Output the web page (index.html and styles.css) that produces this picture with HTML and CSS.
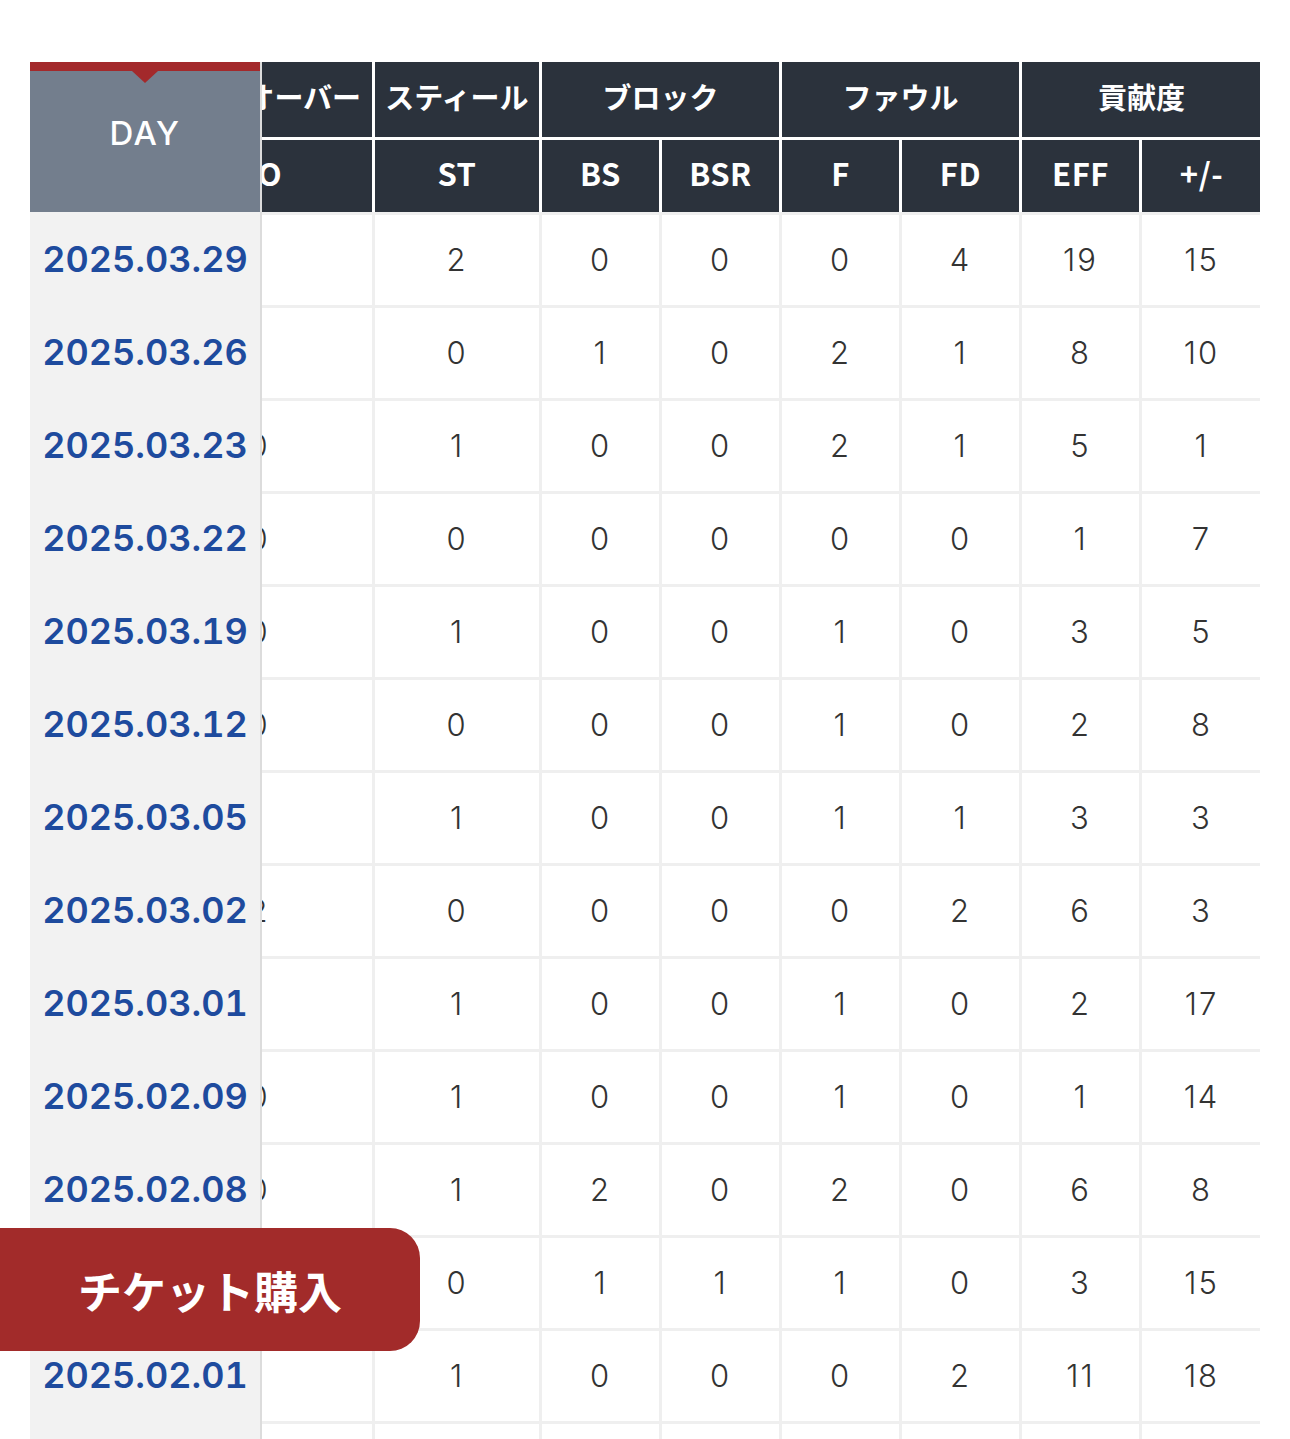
FILE: index.html
```html
<!DOCTYPE html>
<html lang="ja">
<head>
<meta charset="utf-8">
<title>試合別スタッツ</title>
<link rel="stylesheet" href="styles.css">
</head>
<body>
<div class="page">
  <div class="stats">
    <div class="fixed-col">
      <div class="day-head">
        <span class="day-pointer"></span>
        <span class="day-label">DAY</span>
      </div>
      <div class="day-body">
        <div class="day-cell"><a class="date">2025.03.29</a></div>
        <div class="day-cell"><a class="date">2025.03.26</a></div>
        <div class="day-cell"><a class="date">2025.03.23</a></div>
        <div class="day-cell"><a class="date">2025.03.22</a></div>
        <div class="day-cell"><a class="date">2025.03.19</a></div>
        <div class="day-cell"><a class="date">2025.03.12</a></div>
        <div class="day-cell"><a class="date">2025.03.05</a></div>
        <div class="day-cell"><a class="date">2025.03.02</a></div>
        <div class="day-cell"><a class="date">2025.03.01</a></div>
        <div class="day-cell"><a class="date">2025.02.09</a></div>
        <div class="day-cell"><a class="date">2025.02.08</a></div>
        <div class="day-cell"><a class="date">2025.02.02</a></div>
        <div class="day-cell"><a class="date">2025.02.01</a></div>
        <div class="day-cell"><a class="date">2025.01.26</a></div>
      </div>
    </div>
    <div class="scroll-col">
      <div class="data">
        <div class="data-head">
          <div class="hcell">ターンオーバー</div>
          <div class="hcell">スティール</div>
          <div class="hcell span2">ブロック</div>
          <div class="hcell span2">ファウル</div>
          <div class="hcell span2">貢献度</div>
          <div class="hcell sub">TO</div>
          <div class="hcell sub">ST</div>
          <div class="hcell sub">BS</div>
          <div class="hcell sub">BSR</div>
          <div class="hcell sub">F</div>
          <div class="hcell sub">FD</div>
          <div class="hcell sub">EFF</div>
          <div class="hcell sub">+/-</div>
        </div>
        <div class="data-body">
          <div class="c to">1</div><div class="c">2</div><div class="c">0</div><div class="c">0</div><div class="c">0</div><div class="c">4</div><div class="c">19</div><div class="c">15</div>
          <div class="c to">1</div><div class="c">0</div><div class="c">1</div><div class="c">0</div><div class="c">2</div><div class="c">1</div><div class="c">8</div><div class="c">10</div>
          <div class="c to">0</div><div class="c">1</div><div class="c">0</div><div class="c">0</div><div class="c">2</div><div class="c">1</div><div class="c">5</div><div class="c">1</div>
          <div class="c to">0</div><div class="c">0</div><div class="c">0</div><div class="c">0</div><div class="c">0</div><div class="c">0</div><div class="c">1</div><div class="c">7</div>
          <div class="c to">0</div><div class="c">1</div><div class="c">0</div><div class="c">0</div><div class="c">1</div><div class="c">0</div><div class="c">3</div><div class="c">5</div>
          <div class="c to">0</div><div class="c">0</div><div class="c">0</div><div class="c">0</div><div class="c">1</div><div class="c">0</div><div class="c">2</div><div class="c">8</div>
          <div class="c to">1</div><div class="c">1</div><div class="c">0</div><div class="c">0</div><div class="c">1</div><div class="c">1</div><div class="c">3</div><div class="c">3</div>
          <div class="c to">2</div><div class="c">0</div><div class="c">0</div><div class="c">0</div><div class="c">0</div><div class="c">2</div><div class="c">6</div><div class="c">3</div>
          <div class="c to">1</div><div class="c">1</div><div class="c">0</div><div class="c">0</div><div class="c">1</div><div class="c">0</div><div class="c">2</div><div class="c">17</div>
          <div class="c to">0</div><div class="c">1</div><div class="c">0</div><div class="c">0</div><div class="c">1</div><div class="c">0</div><div class="c">1</div><div class="c">14</div>
          <div class="c to">0</div><div class="c">1</div><div class="c">2</div><div class="c">0</div><div class="c">2</div><div class="c">0</div><div class="c">6</div><div class="c">8</div>
          <div class="c to">1</div><div class="c">0</div><div class="c">1</div><div class="c">1</div><div class="c">1</div><div class="c">0</div><div class="c">3</div><div class="c">15</div>
          <div class="c to">1</div><div class="c">1</div><div class="c">0</div><div class="c">0</div><div class="c">0</div><div class="c">2</div><div class="c">11</div><div class="c">18</div>
          <div class="c to">2</div><div class="c">0</div><div class="c">1</div><div class="c">0</div><div class="c">3</div><div class="c">1</div><div class="c">4</div><div class="c">6</div>
        </div>
      </div>
    </div>
  </div>
  <a class="ticket-btn">チケット購入</a>
</div>
</body>
</html>
```

FILE: styles.css
```css
* {
  box-sizing: border-box;
}

html, body {
  margin: 0;
  padding: 0;
  background: #ffffff;
}

body {
  font-family: "Noto Sans CJK JP", "Noto Sans", sans-serif;
  color: #333333;
}

.page {
  padding: 62px 30px 0 30px;
}

.stats {
  display: flex;
  align-items: flex-start;
  width: 1230px;
}

/* fixed DAY column */
.fixed-col {
  flex: 0 0 232px;
  width: 232px;
  border-right: 2px solid #dcdcdc;
  background: #f2f2f2;
}

.day-head {
  position: relative;
  height: 150px;
  background: #737e8d;
  border-top: 9px solid #a3292b;
  display: flex;
  align-items: center;
  justify-content: center;
  padding-bottom: 16px;
}

.day-pointer {
  position: absolute;
  top: 0;
  left: 50%;
  margin-left: -13px;
  width: 0;
  height: 0;
  border-left: 13px solid transparent;
  border-right: 13px solid transparent;
  border-top: 12px solid #a3292b;
}

.day-label {
  font-family: Inter, "Noto Sans CJK JP", sans-serif;
  color: #ffffff;
  font-size: 33px;
  font-weight: 500;
  letter-spacing: 1.5px;
  line-height: 1;
}

.day-body {
  display: flex;
  flex-direction: column;
}

.day-cell {
  height: 93px;
  padding-top: 3px;
  padding-bottom: 2px;
  display: flex;
  align-items: center;
  justify-content: center;
}

.date {
  font-family: Inter, "Noto Sans CJK JP", sans-serif;
  font-variant-numeric: tabular-nums;
  color: #1e4b9e;
  font-size: 36px;
  font-weight: 600;
  letter-spacing: 0;
  line-height: 1;
  text-decoration: none;
}

/* scrolled data area */
.scroll-col {
  flex: 0 0 998px;
  width: 998px;
  overflow: hidden;
}

.data {
  width: 1112px;
  margin-left: -113px;
}

.data-head,
.data-body {
  display: grid;
  grid-template-columns: 223px 164px 117px 117px 117px 117px 117px 119px;
  column-gap: 3px;
  row-gap: 3px;
}

.data-head {
  grid-template-rows: 75px 72px;
  background: #ffffff;
}

.hcell {
  background: #2b323c;
  color: #ffffff;
  font-size: 29px;
  font-weight: 600;
  line-height: 1;
  display: flex;
  align-items: center;
  justify-content: center;
  white-space: nowrap;
  padding-bottom: 6px;
}

.hcell.sub {
  font-size: 31px;
  letter-spacing: 0.5px;
  padding-bottom: 7px;
}

.span2 {
  grid-column: span 2;
}

.data-body {
  background: #efefef;
  padding-top: 3px;
  grid-auto-rows: 90px;
}

.c {
  font-family: Inter, "Noto Sans CJK JP", sans-serif;
  background: #ffffff;
  display: flex;
  align-items: center;
  justify-content: center;
  font-size: 31px;
  font-weight: 300;
  letter-spacing: 2px;
  color: #333333;
  line-height: 1;
  padding-bottom: 2px;
}

.c.to {
  letter-spacing: 0;
  padding-right: 5px;
}

/* floating ticket button */
.ticket-btn {
  position: fixed;
  left: 0;
  bottom: 88px;
  width: 420px;
  height: 123px;
  background: #a22b2a;
  border-radius: 0 30px 30px 0;
  display: flex;
  align-items: center;
  justify-content: center;
  color: #ffffff;
  font-size: 44px;
  font-weight: 700;
  text-decoration: none;
  line-height: 1;
}
```
